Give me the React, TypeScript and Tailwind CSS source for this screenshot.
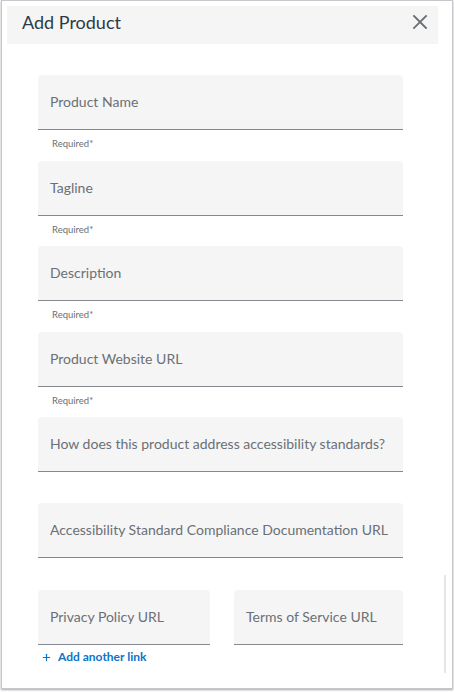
import { Plus } from 'lucide-react';

const fields = [
  { label: 'Product Name', required: true },
  { label: 'Tagline', required: true },
  { label: 'Description', required: true },
  { label: 'Product Website URL', required: true },
  { label: 'How does this product address accessibility standards?', required: false },
  { label: 'Accessibility Standard Compliance Documentation URL', required: false },
];

const Field = ({ label, className = '' }: { label: string; className?: string }) => (
  <div
    className={`h-[55px] flex items-center pl-[12px] pb-[1px] bg-[#f5f5f5] rounded-t-[4px] border-b border-[#85898d] text-[14px] text-[#6b7075] ${className}`}
  >
    {label}
  </div>
);

const App = () => {
  return (
    <div className="w-[454px] h-[692px] bg-white" style={{ fontFamily: 'Lato, "Noto Sans", sans-serif' }}>
      <div className="relative ml-[1px] w-[452px] h-[689px] border border-[#c4c8cc] shadow-[0_1px_2px_rgba(0,0,0,0.35)] px-[5px] pt-[5px]">
        {/* Header */}
        <div className="w-[431px] h-[38px] bg-[#f5f5f5] flex items-center justify-between pl-[15px] pr-[10px] pb-[6px]">
          <span className="text-[18px] text-[#2d3b45] leading-none">Add Product</span>
          <svg width="16" height="16" viewBox="0 0 16 16" className="text-[#6b7075]">
            <path d="M2 2L14 14M14 2L2 14" stroke="currentColor" strokeWidth="1.8" strokeLinecap="square" />
          </svg>
        </div>

        {/* Form */}
        <div className="pl-[31px] pt-[31px] w-[396px]">
          {fields.map((f, i) => (
            <div key={f.label} className={i % 2 === 0 ? 'h-[86px]' : 'h-[85px]'}>
              <Field label={f.label} />
              {f.required && (
                <div className="pl-[14px] pt-[9px] text-[9.5px] leading-none text-[#6b7075]">Required*</div>
              )}
            </div>
          ))}

          <div className="flex gap-[24px] mt-[2px]">
            <Field label="Privacy Policy URL" className="w-[172px]" />
            <Field label="Terms of Service URL" className="w-[169px]" />
          </div>
          <div className="flex items-center gap-[6px] pl-[3px] pt-[3px] text-[12px] font-bold text-[#0b74c8]">
            <Plus size={11} strokeWidth={2.5} />
            <span>Add another link</span>
          </div>
        </div>

        {/* Scrollbar */}
        <div className="absolute left-[442px] top-[574px] w-[2px] h-[98px] bg-[#e6e6e6]" />
      </div>
    </div>
  );
};

export default App;
